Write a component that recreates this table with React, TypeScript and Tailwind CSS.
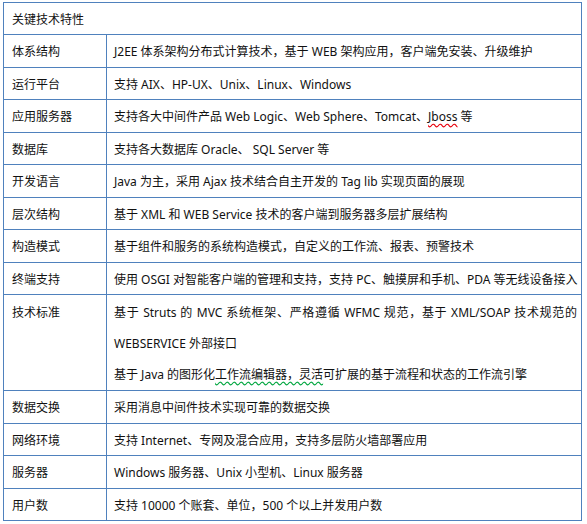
const rows: [string, React.ReactNode][] = [
  ["体系结构", "J2EE 体系架构分布式计算技术，基于 WEB 架构应用，客户端免安装、升级维护"],
  ["运行平台", "支持 AIX、HP-UX、Unix、Linux、Windows"],
  [
    "应用服务器",
    <>
      支持各大中间件产品 Web Logic、Web Sphere、Tomcat、
      <span className="underline decoration-wavy decoration-red-600 underline-offset-2">Jboss</span> 等
    </>,
  ],
  ["数据库", "支持各大数据库 Oracle、 SQL Server 等"],
  ["开发语言", "Java 为主，采用 Ajax 技术结合自主开发的 Tag lib 实现页面的展现"],
  ["层次结构", "基于 XML 和 WEB Service 技术的客户端到服务器多层扩展结构"],
  ["构造模式", "基于组件和服务的系统构造模式，自定义的工作流、报表、预警技术"],
  ["终端支持", "使用 OSGI 对智能客户端的管理和支持，支持 PC、触摸屏和手机、PDA 等无线设备接入"],
]

const rows2: [string, string][] = [
  ["数据交换", "采用消息中间件技术实现可靠的数据交换"],
  ["网络环境", "支持 Internet、专网及混合应用，支持多层防火墙部署应用"],
  ["服务器", "Windows 服务器、Unix 小型机、Linux 服务器"],
  ["用户数", "支持 10000 个账套、单位，500 个以上并发用户数"],
]

function Row({ label, children }: { label: string; children: React.ReactNode }) {
  return (
    <tr className="h-[32.5px]">
      <td className="border border-[#4f81bd] pl-2 pt-[3px] leading-[28px] align-middle">{label}</td>
      <td className="border border-[#4f81bd] pl-[7px] pt-[3px] leading-[28px] align-middle whitespace-nowrap">
        {children}
      </td>
    </tr>
  )
}

export default function App() {
  return (
    <div className="w-[587px] h-[524px] bg-white pt-[2px] pl-[3px]">
      <table
        className="w-[579px] border-collapse table-fixed text-[12px] leading-[31px] text-[#111]"
        style={{ fontFamily: '"Noto Sans", "Noto Sans CJK SC", sans-serif' }}
      >
        <colgroup>
          <col className="w-[103px]" />
          <col />
        </colgroup>
        <tbody>
          <tr className="h-[32px]">
            <td colSpan={2} className="border border-[#4f81bd] pl-2 pt-[2px] leading-[28px]">
              关键技术特性
            </td>
          </tr>
          {rows.map(([k, v]) => (
            <Row key={k} label={k}>
              {v}
            </Row>
          ))}
          <tr className="h-[95px]">
            <td className="border border-[#4f81bd] pl-2 align-top pt-[2px]">技术标准</td>
            <td className="border border-[#4f81bd] pl-[7px] pr-1 align-top pt-[2px]">
              <div className="[text-align-last:justify] whitespace-nowrap">
                基于 Struts 的 MVC 系统框架、严格遵循 WFMC 规范，基于 XML/SOAP 技术规范的
              </div>
              <div>WEBSERVICE 外部接口</div>
              <div className="whitespace-nowrap">
                基于 Java 的图形化
                <span className="underline decoration-wavy decoration-green-600 underline-offset-2">
                  工作流编辑器，灵活
                </span>
                可扩展的基于流程和状态的工作流引擎
              </div>
            </td>
          </tr>
          {rows2.map(([k, v]) => (
            <Row key={k} label={k}>
              {v}
            </Row>
          ))}
        </tbody>
      </table>
    </div>
  )
}
